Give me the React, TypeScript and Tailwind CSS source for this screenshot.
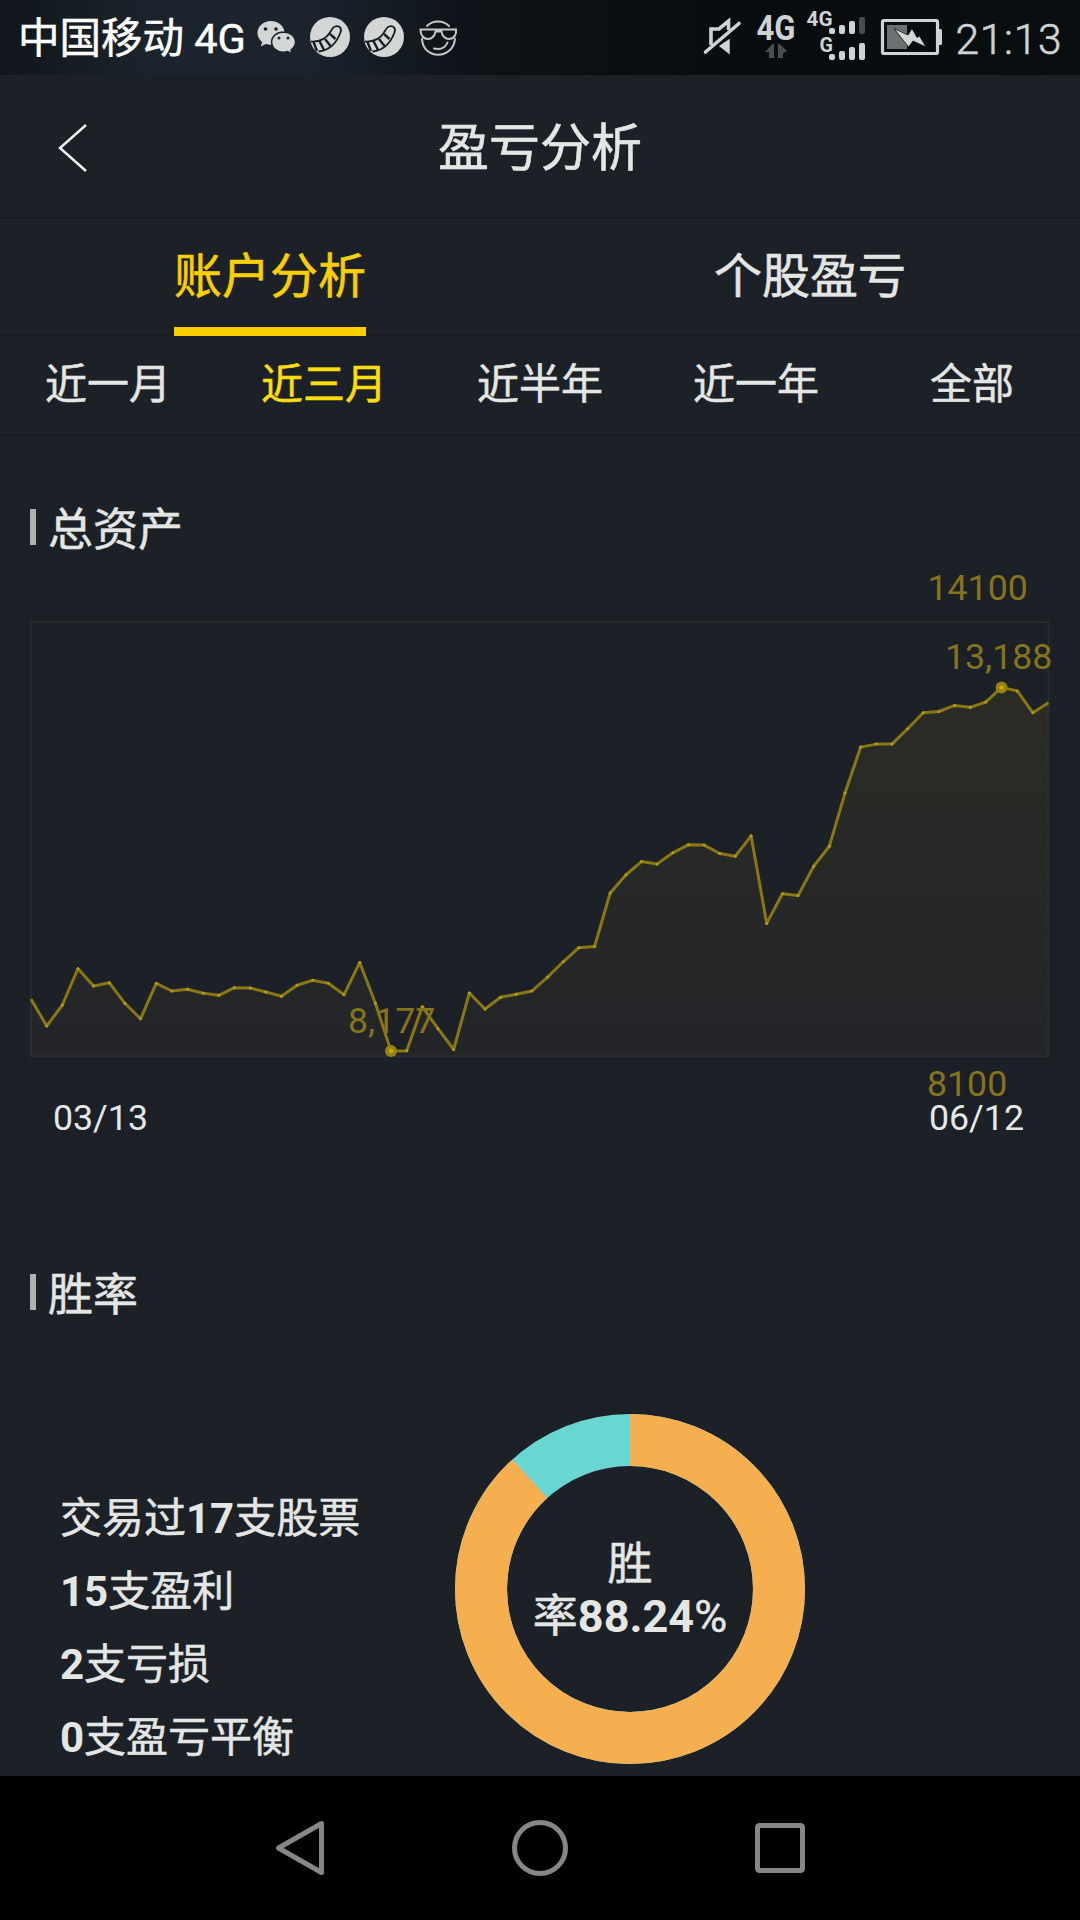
import type { ReactNode } from 'react';

interface PeriodTab {
  label: string;
  active?: boolean;
}

const periods: PeriodTab[] = [
  { label: '近一月' },
  { label: '近三月', active: true },
  { label: '近半年' },
  { label: '近一年' },
  { label: '全部' },
];

// total asset line, one y value per trading day
const assetLine = [
  999, 1026, 1005, 968.7, 986, 982.7, 1003.3, 1018.7, 983.3, 991, 989.3, 993.3, 995.3, 987.7, 988, 992, 996.3,
  985.3, 980.3, 983.3, 994.7, 962.5, 1003.3, 1051, 1050.7, 1006.7, 1028.7, 1049.5, 993, 1009, 997.3, 994.3, 991,
  977.1, 961.8, 947.7, 946.5, 893, 875, 861.6, 863.9, 852.8, 844.7, 845.1, 853.5, 856.2, 835.8, 923.4, 893.7,
  895.6, 866.2, 846.3, 793.1, 747.1, 744.1, 744.1, 728.8, 712.7, 711.5, 705.4, 707.3, 702, 687.4, 690.9, 712.7,
  702.7,
];

const LEFT = 31;
const RIGHT = 1048.5;
const TOP = 622;
const BOTTOM = 1056.5;

const points = assetLine.map((y, i) => ({ x: LEFT + (i * (RIGHT - LEFT)) / (assetLine.length - 1), y }));

function StatusBar() {
  return (
    <div className="flex h-[75px] items-center justify-between bg-[linear-gradient(90deg,#10161a_0%,#1b242d_14%,#1b242d_28%,#0c1216_45%,#070c0f_70%,#090e11_100%)] pl-[18px]">
      <div className="flex items-center">
        <span className="w-[232px] pt-[3px] text-[41.500px] leading-none whitespace-pre text-white [-webkit-text-stroke:0.5px]">中国移动 4G</span>
        <svg className="h-[75px] w-[210px]" viewBox="250 0 210 75" fill="none">
          {/* chat bubbles */}
          <g fill="#d3d6d5">
            <path d="M271 21c-7.500 0-13.500 5.200-13.500 12 0 3.700 1.800 6.800 4.700 9l-1.500 4.500 5-2.500c1.600.5 3.400.8 5.300.8 7.500 0 13.500-5 13.500-11.800S278.500 21 271 21z" />
            <path
              d="M283.500 32c-6.600 0-11.900 4.400-11.900 10s5.300 10.200 11.900 10.200c1.500 0 3-.2 4.300-.7l4.400 2.400-1.200-3.900c2.800-1.900 4.500-4.700 4.500-8 0-5.600-5.400-10-12-10z"
              stroke="#1b242d"
              strokeWidth="1.500"
            />
          </g>
          <g fill="#1b242d">
            <circle cx="265.500" cy="29" r="1.800" />
            <circle cx="276" cy="29" r="1.800" />
            <circle cx="279" cy="38" r="1.500" />
            <circle cx="288" cy="38" r="1.500" />
          </g>
          <Smile x={0} />
          <Smile x={54} />
          {/* face with sunglasses */}
          <g stroke="#c5c8c9" strokeWidth="2" strokeLinecap="round">
            <path d="M427 26c6-6 16-6 22 0M422 39c1 21 31 21 33 0" />
            <path d="M420.500 29.500h35.500c.8 5-2 9.500-7 9.500-4 0-7-3.500-7.500-7.500h-6c-.5 4-3.500 7.500-7.500 7.500-5 0-7.700-4.500-7.500-9.500z" />
            <path d="M434 48.500c7 1.500 11.500-1 13.500-6" />
          </g>
        </svg>
      </div>
      <svg className="h-[75px] w-[390px]" viewBox="690 0 390 75" fill="none">
        {/* muted speaker */}
        <g stroke="#cfd3d3" strokeWidth="3.600">
          <path d="M711 45V29h8L728.500 21v9" />
          <path d="M721 46l7.500 6V41z" fill="#cfd3d3" strokeWidth="2.500" />
          <path d="M705.500 52L739 23.500" strokeLinecap="round" />
        </g>
        <g fill="#cfd3d3" fontFamily="Roboto, sans-serif" fontWeight="700">
          <text x="756.500" y="40" fontSize="35" textLength="39" lengthAdjust="spacingAndGlyphs">4G</text>
          <text x="806.500" y="26" fontSize="20" textLength="26" lengthAdjust="spacingAndGlyphs">4G</text>
          <text x="819.500" y="51.500" fontSize="19.500" textLength="13.500" lengthAdjust="spacingAndGlyphs">G</text>
        </g>
        <path d="M765 52l7.500-8h1.500v14h-5v-6zM787 51l-7.500-7H778v14h5v-5z" fill="#4a4e50" />
        <g fill="#cfd3d3">
          <rect x="829" y="28" width="6" height="6" rx="2" />
          <rect x="839" y="25" width="6" height="9" rx="2" />
          <rect x="849" y="21" width="6" height="13" rx="2" />
          <rect x="859" y="17" width="6" height="17" rx="2" fill="#474c4e" />
          <rect x="829" y="54" width="6" height="6" rx="2" />
          <rect x="839" y="51" width="6" height="9" rx="2" />
          <rect x="849" y="47" width="6" height="13" rx="2" />
          <rect x="859" y="43" width="6" height="17" rx="2" />
          <path d="M938 29h2.500q1.500 0 1.500 1.500v13q0 1.500-1.500 1.500H938z" />
        </g>
        <rect x="882.500" y="20.500" width="55" height="33" rx="1.500" stroke="#cfd3d3" strokeWidth="3.200" />
        <rect x="887" y="25" width="20" height="24" fill="#6d7172" />
        <path d="M894 28.500L908 35l4-6.500 5 9 2.500-1.500L926 47l-13-6-4.500 6z" fill="#d5d8d8" stroke="#0a0f12" strokeWidth="0.800" />
        <text
          x="955.500"
          y="54"
          fontSize="42.500"
          fontFamily="Roboto, sans-serif"
          fontWeight="300"
          fill="#cfd3d3"
          stroke="#cfd3d3"
          strokeWidth="0.600"
          textLength="106"
        >
          21:13
        </text>
      </svg>
    </div>
  );
}

function Smile({ x }: { x: number }) {
  return (
    <g transform={`translate(${x} 0)`}>
      <circle cx="330" cy="37" r="20" fill="#d3d6d5" />
      <path
        d="M311 41.500c9 .5 15-2.500 19-9 1.500-2.500 3-5.500 5-6 4.500-1.500 7 2 5.500 6-4 10.500-11.500 18-22 19"
        stroke="#151c22"
        strokeWidth="1.800"
        strokeLinejoin="round"
      />
      <path d="M313.500 42l3.500 9M319.500 41l4.500 9M325 39l5.500 7M330 34l5.500 5" stroke="#151c22" strokeWidth="2.400" />
    </g>
  );
}

function Header() {
  return (
    <header className="grid h-[144px] grid-cols-[1fr_auto_1fr] items-center border-b-2 border-[#181b20]">
      <svg className="mt-[3px] ml-14 h-[50px] w-8" viewBox="0 0 32 50" fill="none" stroke="#f0f1f1" strokeWidth="2.500">
        <path d="M30 2L4 25l26 23" />
      </svg>
      <h1 className="pt-1 text-[51px] leading-none [-webkit-text-stroke:0.6px]">盈亏分析</h1>
    </header>
  );
}

function SectionTitle({ children }: { children: ReactNode }) {
  return (
    <h2 className="flex items-start gap-3 pl-[30px] text-[45px] leading-[52px] [-webkit-text-stroke:0.5px]">
      <span className="mt-1 h-9 w-1.5 bg-[#b1b2b0]" />
      {children}
    </h2>
  );
}

function AssetChart() {
  const line = points.map((p) => `${p.x.toFixed(1)},${p.y}`).join(' ');

  return (
    <svg className="block h-[600px] w-full" viewBox="0 560 1080 600" fontFamily="Roboto, sans-serif" fontSize="35.700">
      <defs>
        <linearGradient id="area" gradientUnits="userSpaceOnUse" x1="0" y1={687} x2="0" y2={BOTTOM}>
          <stop offset="0" stopColor="#f5cf00" stopOpacity="0.070" />
          <stop offset="1" stopColor="#f5cf50" stopOpacity="0.030" />
        </linearGradient>
      </defs>
      <rect x={LEFT} y={TOP} width={RIGHT - LEFT} height={BOTTOM - TOP} fill="none" stroke="#282b2e" strokeWidth="2" />
      <polygon points={`${LEFT},${BOTTOM} ${line} ${RIGHT},${BOTTOM}`} fill="url(#area)" />
      <polyline points={line} fill="none" stroke="#8a7614" strokeWidth="3" strokeLinejoin="round" />
      {points.slice(1, -1).map((p) => (
        <circle key={p.x} cx={p.x} cy={p.y} r="1.500" fill="#b89d0e" />
      ))}
      {/* lowest and highest day */}
      {[points[23], points[62]].map((p) => (
        <g key={p.x}>
          <circle cx={p.x} cy={p.y} r="6" fill="#98820f" />
          <circle cx={p.x} cy={p.y} r="2.200" fill="#c8aa06" />
        </g>
      ))}
      <g fill="#85741b">
        <text x="927.500" y="600">14100</text>
        <text x="945" y="669">13,188</text>
        <text x="348" y="1033">8,177</text>
        <text x="927" y="1096">8100</text>
      </g>
      <g fill="#e6e8e8">
        <text x="53" y="1130">03/13</text>
        <text x="929" y="1130">06/12</text>
      </g>
    </svg>
  );
}

function WinRateDonut() {
  const circumference = 2 * Math.PI * 149;
  const win = circumference * (15 / 17);

  return (
    <div className="relative size-[350px]">
      <svg className="size-full -rotate-90" viewBox="0 0 350 350" fill="none" strokeWidth="52">
        <circle cx="175" cy="175" r="149" stroke="#6ad6d2" />
        <circle cx="175" cy="175" r="149" stroke="#f5af4e" strokeDasharray={`${win} ${circumference}`} />
      </svg>
      <div className="absolute inset-0 flex flex-col items-center justify-center pt-[3px] text-[45px] leading-[52px]">
        <span className="[-webkit-text-stroke:0.5px]">胜</span>
        <span className="[-webkit-text-stroke:0.5px]">
          率<b className="[-webkit-text-stroke:0px]">88.24</b>%
        </span>
      </div>
    </div>
  );
}

function NavBar() {
  return (
    <nav className="flex h-36 items-center justify-center gap-[180px] bg-black">
      <svg className="size-[60px]" viewBox="0 0 60 60" fill="none" stroke="#868686" strokeWidth="5" strokeLinejoin="round">
        <path d="M51.500 5.500v49L8.500 30z" />
      </svg>
      <svg className="size-[60px]" viewBox="0 0 60 60" fill="none" stroke="#868686" strokeWidth="5">
        <circle cx="30" cy="30" r="25.500" />
      </svg>
      <svg className="size-[60px]" viewBox="0 0 60 60" fill="none" stroke="#868686" strokeWidth="5">
        <rect x="7.500" y="7.500" width="45" height="45" rx="2" />
      </svg>
    </nav>
  );
}

export default function App() {
  return (
    <div className="flex h-[1920px] w-[1080px] flex-col overflow-hidden bg-[#1c2027] font-[Roboto,'Noto_Sans_CJK_SC',sans-serif] text-[#e4e6e4]">
      <StatusBar />
      <Header />

      {/* Analysis tabs */}
      <div className="grid h-[117px] grid-cols-2 justify-items-center border-b-2 border-[#181b20] text-[48px] leading-[107px] [-webkit-text-stroke:0.6px]">
        <button className="flex h-[117px] items-start border-b-[9px] border-[#f8cf00] pt-1 text-[#f8cf00]">账户分析</button>
        <button className="flex h-[117px] items-start pt-1">个股盈亏</button>
      </div>

      {/* Periods */}
      <div className="grid h-[100px] grid-cols-5 border-b-2 border-[#181b20] text-[42px] leading-[94px] [-webkit-text-stroke:0.5px]">
        {periods.map((p) => (
          <button key={p.label} className={p.active ? 'text-[#fbdd08]' : ''}>
            {p.label}
          </button>
        ))}
      </div>

      <section className="pt-[69px]">
        <SectionTitle>总资产</SectionTitle>
        <div className="mt-[3px]">
          <AssetChart />
        </div>
      </section>

      <section className="flex-1 pt-[110px]">
        <SectionTitle>胜率</SectionTitle>
        <div className="mt-[92px] flex">
          <div className="w-[395px] shrink-0 pt-[68px] pl-[60px] text-[42px] leading-[73px] [-webkit-text-stroke:0.5px]">
            <p>交易过<b className="[-webkit-text-stroke:0px]">17</b>支股票</p>
            <p><b className="[-webkit-text-stroke:0px]">15</b>支盈利</p>
            <p><b className="[-webkit-text-stroke:0px]">2</b>支亏损</p>
            <p><b className="[-webkit-text-stroke:0px]">0</b>支盈亏平衡</p>
          </div>
          <div className="ml-[60px]">
            <WinRateDonut />
          </div>
        </div>
      </section>

      <NavBar />
    </div>
  );
}
